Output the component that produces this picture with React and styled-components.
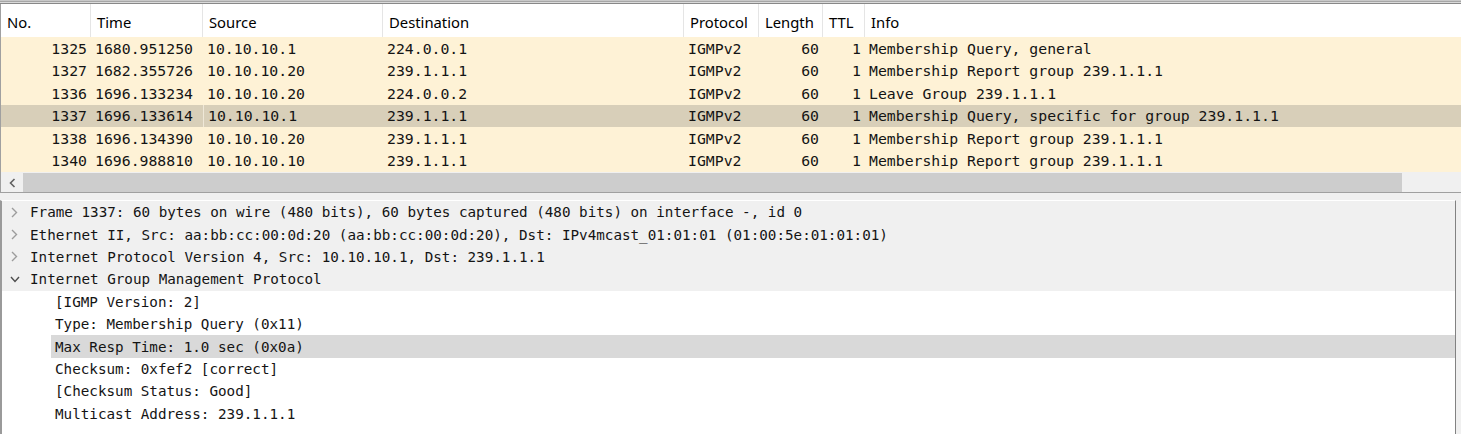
import React from 'react';
import styled, { createGlobalStyle } from 'styled-components';

const GlobalStyle = createGlobalStyle`
  html, body {
    margin: 0;
    padding: 0;
    background: #f0f0f0;
  }
  * {
    box-sizing: border-box;
  }
`;

const GRID = '90px 112px 180px 301px 75px 64px 42px 1fr';
const MONO = '"DejaVu Sans Mono", "Liberation Mono", monospace';

const Window = styled.div`
  width: 1461px;
  height: 434px;
  display: flex;
  flex-direction: column;
  overflow: hidden;
  background: #f0f0f0;
`;

const TopEdge = styled.div`
  height: 4px;
  background: linear-gradient(
    #c8c8c8 0, #c8c8c8 1px,
    #a6a6a6 1px, #a6a6a6 2px,
    #dadada 2px, #dadada 3px,
    #888888 3px, #888888 4px
  );
`;

const PacketList = styled.div`
  border-left: 1px solid #a0a0a0;
  background: #ffffff;
`;

const HeaderRow = styled.div`
  display: grid;
  grid-template-columns: ${GRID};
  height: 33px;
  background: #ffffff;
`;

const HeaderCell = styled.div`
  display: flex;
  align-items: center;
  padding: 2px 0 0 6px;
  font-family: "Noto Sans", "Open Sans", sans-serif;
  font-size: 14.8px;
  color: #000;
  border-right: ${p => (p.last ? 'none' : '1px solid #e5e5e5')};
  white-space: nowrap;
`;

const Row = styled.div`
  display: grid;
  grid-template-columns: ${GRID};
  height: 22.5px;
  background: ${p => (p.selected ? '#d8cfb9' : '#fef2d6')};
  font-family: ${MONO};
  font-size: 14.8px;
  color: #141414;
`;

const Cell = styled.div`
  display: flex;
  align-items: center;
  justify-content: ${p => (p.right ? 'flex-end' : 'flex-start')};
  padding: 0 4px;
  white-space: nowrap;
  overflow: hidden;
  border-left: ${p => (p.focus ? '1px solid #efe8d8' : 'none')};
`;

const ScrollBar = styled.div`
  display: flex;
  height: 21px;
  background: #f0f0f0;
  padding-top: 1px;
  border-bottom: 1px solid #a0a0a0;
`;

const ScrollButton = styled.div`
  width: 22px;
  display: flex;
  align-items: center;
  justify-content: center;
  color: #606060;
`;

const ScrollThumb = styled.div`
  width: 1379px;
  background: #cdcdcd;
`;

const Splitter = styled.div`
  height: 7px;
  background: #f0f0f0;
`;

const DetailsFrame = styled.div`
  flex: 1;
  display: flex;
  background: #f0f0f0;
`;

const Details = styled.div`
  width: 1456px;
  border-left: 2px solid #9a9a9a;
  border-right: 1px solid #828282;
  border-top: 1px solid #ffffff;
  background: #ffffff;
  font-family: ${MONO};
  font-size: 14.25px;
  color: #141414;
`;

const TreeRow = styled.div`
  display: flex;
  align-items: center;
  height: 22.4px;
  background: ${p => (p.top ? '#f0f0f0' : '#ffffff')};
  white-space: nowrap;
`;

const Toggle = styled.div`
  width: 24px;
  display: flex;
  align-items: center;
  justify-content: center;
  padding-left: 1px;
`;

const Label = styled.div`
  height: 100%;
  display: flex;
  align-items: center;
  padding-left: 4px;
`;

const ChildLabel = styled(Label)`
  flex: 1;
  margin-left: 49px;
  background: ${p => (p.selected ? '#d9d9d9' : 'transparent')};
`;

const Chevron = ({ open }) =>
  open ? (
    <svg width="10" height="7" viewBox="0 0 10 7">
      <polyline points="1,1 5,5.5 9,1" fill="none" stroke="#4d4d4d" strokeWidth="1.4" />
    </svg>
  ) : (
    <svg width="7" height="11" viewBox="0 0 7 11">
      <polyline points="1,1 5.5,5.5 1,10" fill="none" stroke="#9c9c9c" strokeWidth="1.4" />
    </svg>
  );

const columns = [
  { key: 'no', label: 'No.', right: true },
  { key: 'time', label: 'Time' },
  { key: 'src', label: 'Source' },
  { key: 'dst', label: 'Destination' },
  { key: 'proto', label: 'Protocol' },
  { key: 'len', label: 'Length', right: true },
  { key: 'ttl', label: 'TTL', right: true },
  { key: 'info', label: 'Info' },
];

const packets = [
  { no: '1325', time: '1680.951250', src: '10.10.10.1', dst: '224.0.0.1', proto: 'IGMPv2', len: '60', ttl: '1', info: 'Membership Query, general' },
  { no: '1327', time: '1682.355726', src: '10.10.10.20', dst: '239.1.1.1', proto: 'IGMPv2', len: '60', ttl: '1', info: 'Membership Report group 239.1.1.1' },
  { no: '1336', time: '1696.133234', src: '10.10.10.20', dst: '224.0.0.2', proto: 'IGMPv2', len: '60', ttl: '1', info: 'Leave Group 239.1.1.1' },
  { no: '1337', time: '1696.133614', src: '10.10.10.1', dst: '239.1.1.1', proto: 'IGMPv2', len: '60', ttl: '1', info: 'Membership Query, specific for group 239.1.1.1', selected: true },
  { no: '1338', time: '1696.134390', src: '10.10.10.20', dst: '239.1.1.1', proto: 'IGMPv2', len: '60', ttl: '1', info: 'Membership Report group 239.1.1.1' },
  { no: '1340', time: '1696.988810', src: '10.10.10.10', dst: '239.1.1.1', proto: 'IGMPv2', len: '60', ttl: '1', info: 'Membership Report group 239.1.1.1' },
];

const tree = [
  { text: 'Frame 1337: 60 bytes on wire (480 bits), 60 bytes captured (480 bits) on interface -, id 0' },
  { text: 'Ethernet II, Src: aa:bb:cc:00:0d:20 (aa:bb:cc:00:0d:20), Dst: IPv4mcast_01:01:01 (01:00:5e:01:01:01)' },
  { text: 'Internet Protocol Version 4, Src: 10.10.10.1, Dst: 239.1.1.1' },
  {
    text: 'Internet Group Management Protocol',
    open: true,
    children: [
      { text: '[IGMP Version: 2]' },
      { text: 'Type: Membership Query (0x11)' },
      { text: 'Max Resp Time: 1.0 sec (0x0a)', selected: true },
      { text: 'Checksum: 0xfef2 [correct]' },
      { text: '[Checksum Status: Good]' },
      { text: 'Multicast Address: 239.1.1.1' },
    ],
  },
];

export default function App() {
  return (
    <>
      <GlobalStyle />
      <Window>
        <TopEdge />
        <PacketList>
          <HeaderRow>
            {columns.map((c, i) => (
              <HeaderCell key={c.key} last={i === columns.length - 1}>
                {c.label}
              </HeaderCell>
            ))}
          </HeaderRow>
          {packets.map(p => (
            <Row key={p.no} selected={p.selected}>
              {columns.map(c => (
                <Cell key={c.key} right={c.right} focus={p.selected && c.key === 'src'}>
                  {p[c.key]}
                </Cell>
              ))}
            </Row>
          ))}
          <ScrollBar>
            <ScrollButton>
              <svg width="7" height="10" viewBox="0 0 7 10">
                <polyline points="5.5,1 1.5,5 5.5,9" fill="none" stroke="#606060" strokeWidth="1.6" />
              </svg>
            </ScrollButton>
            <ScrollThumb />
          </ScrollBar>
        </PacketList>
        <Splitter />
        <DetailsFrame>
          <Details>
            {tree.map(item => (
              <React.Fragment key={item.text}>
                <TreeRow top>
                  <Toggle>
                    <Chevron open={item.open} />
                  </Toggle>
                  <Label>{item.text}</Label>
                </TreeRow>
                {item.children &&
                  item.children.map(ch => (
                    <TreeRow key={ch.text}>
                      <ChildLabel selected={ch.selected}>{ch.text}</ChildLabel>
                    </TreeRow>
                  ))}
              </React.Fragment>
            ))}
          </Details>
        </DetailsFrame>
      </Window>
    </>
  );
}
